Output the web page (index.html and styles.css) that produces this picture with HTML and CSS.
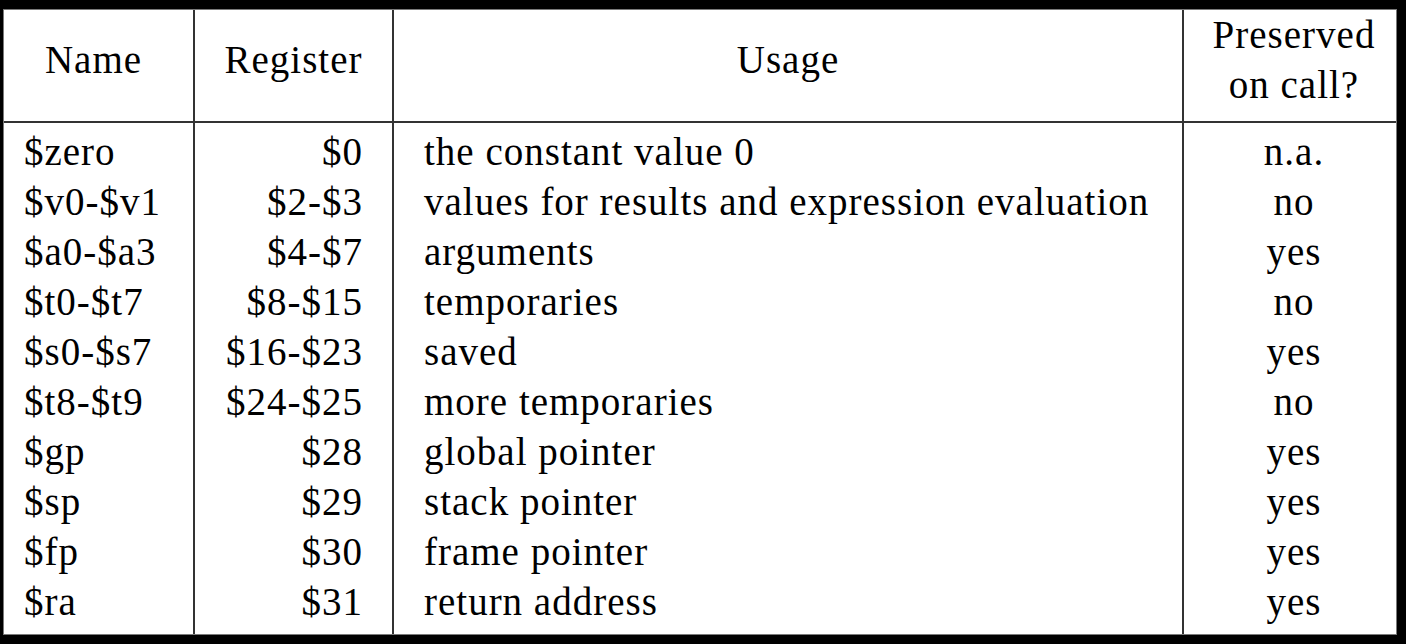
FILE: index.html
```html
<!DOCTYPE html>
<html lang="en">
<head>
<meta charset="utf-8">
<title>MIPS register conventions</title>
<link rel="stylesheet" href="styles.css">
</head>
<body>
<div class="frame">
  <div class="sheet">
    <div class="head head-name">Name</div>
    <div class="head">Register</div>
    <div class="head">Usage</div>
    <div class="head head-pres">Preserved<br>on call?</div>

    <div class="col col-name">
      <div>$zero</div><div>$v0-$v1</div><div>$a0-$a3</div><div>$t0-$t7</div><div>$s0-$s7</div>
      <div>$t8-$t9</div><div>$gp</div><div>$sp</div><div>$fp</div><div>$ra</div>
    </div>
    <div class="col col-reg">
      <div>$0</div><div>$2-$3</div><div>$4-$7</div><div>$8-$15</div><div>$16-$23</div>
      <div>$24-$25</div><div>$28</div><div>$29</div><div>$30</div><div>$31</div>
    </div>
    <div class="col col-use">
      <div>the constant value 0</div><div>values for results and expression evaluation</div><div>arguments</div><div>temporaries</div><div>saved</div>
      <div>more temporaries</div><div>global pointer</div><div>stack pointer</div><div>frame pointer</div><div>return address</div>
    </div>
    <div class="col col-pres">
      <div>n.a.</div><div>no</div><div>yes</div><div>no</div><div>yes</div>
      <div>no</div><div>yes</div><div>yes</div><div>yes</div><div>yes</div>
    </div>
  </div>
</div>
</body>
</html>
```

FILE: styles.css
```css
* { box-sizing: border-box; }

html, body {
  margin: 0;
  padding: 0;
  background: #000;
}

.frame {
  width: 1406px;
  height: 644px;
  padding: 9px 9px 9px 3px;
  background: #000;
}

.sheet {
  width: 1394px;
  height: 626px;
  background: #fff;
  border: 1px solid #7a7a7a;
  display: grid;
  grid-template-columns: 191px 199px 790px 1fr;
  grid-template-rows: 113px 1fr;
  font-family: "Times New Roman", "Liberation Serif", serif;
  font-size: 39px;
  letter-spacing: 1px;
  line-height: 50px;
  color: #000;
}

.head {
  display: flex;
  align-items: center;
  justify-content: center;
  text-align: center;
  padding-bottom: 12px;
  border-bottom: 2px solid #333;
  border-right: 2px solid #333;
}

.head-name { padding-right: 10px; }

.head-pres {
  border-right: none;
  padding-left: 8px;
}

.col {
  padding-top: 4px;
  border-right: 2px solid #333;
  white-space: nowrap;
}

.col-name { padding-left: 20px; }

.col-reg {
  text-align: right;
  padding-right: 29px;
}

.col-use { padding-left: 30px; }

.col-pres {
  border-right: none;
  text-align: center;
  padding-left: 8px;
}
```
